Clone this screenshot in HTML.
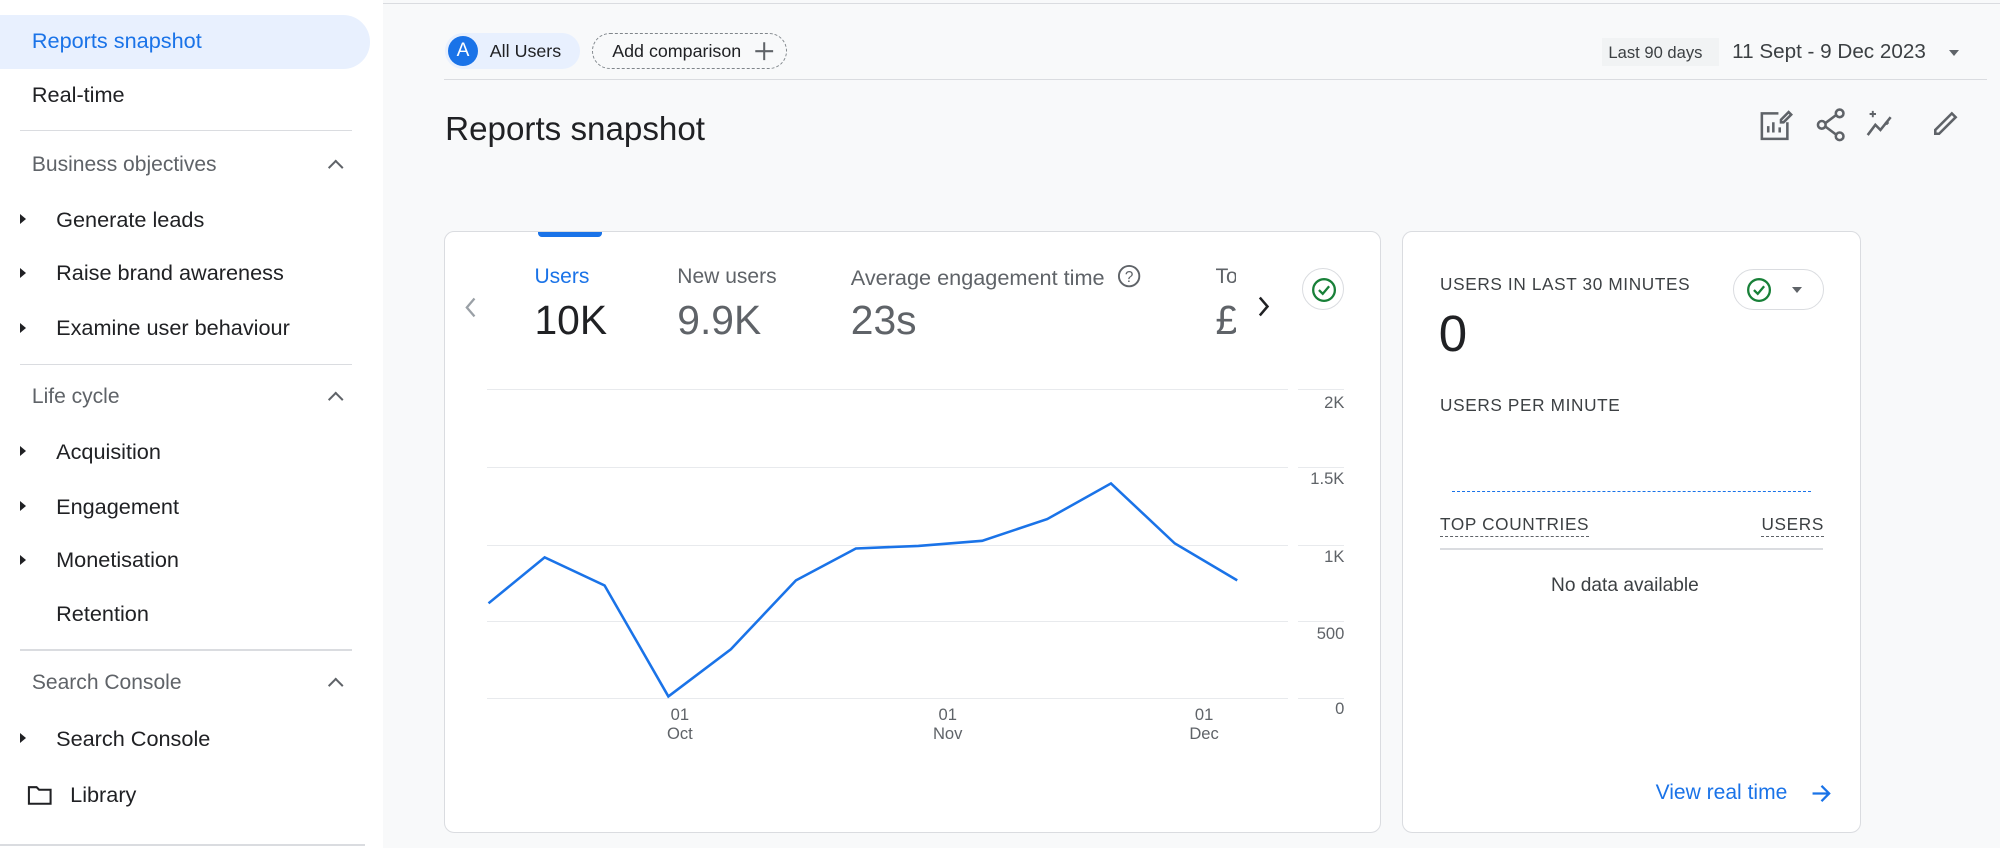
<!DOCTYPE html>
<html><head><meta charset="utf-8"><style>
*{box-sizing:border-box;margin:0;padding:0}
html,body{width:2000px;height:848px;overflow:hidden}
body{background:#f8f9fa;font-family:"Liberation Sans",Arial,sans-serif;color:#202124}
#z{zoom:1.27551;width:1568px;height:665px;position:relative}
.a{position:absolute;white-space:nowrap}
.side{position:absolute;left:0;top:0;width:300px;height:665px;background:#fff}
.si{position:absolute;font-size:17px;color:#202124}
.sh{position:absolute;font-size:16.5px;color:#5f6368}
.hr{position:absolute;left:16px;width:260px;height:1px;background:#dadce0}
.tri{position:absolute;left:16px;width:0;height:0;border-top:4px solid transparent;border-bottom:4px solid transparent;border-left:5px solid #202124}
.car{position:absolute;left:259px;width:9px;height:9px;border-left:2px solid #5f6368;border-top:2px solid #5f6368;transform:rotate(45deg)}
.card{position:absolute;background:#fff;border:1px solid #dadce0;border-radius:8px}
.g{position:absolute;height:1px;background:#e8eaed}
.yl{position:absolute;font-size:13px;color:#5f6368;text-align:right;width:40px}
.xl{position:absolute;font-size:13px;color:#5f6368;text-align:center;width:40px;line-height:15px}
</style></head><body><div id="z">
<div class="side">
 <div class="a" style="left:0;top:12px;width:290px;height:42px;background:#e8f0fe;border-radius:0 21px 21px 0"></div>
 <div class="si" style="left:25px;top:22px;color:#1a73e8">Reports snapshot</div>
 <div class="si" style="left:25px;top:64px">Real-time</div>
 <div class="hr" style="top:102px"></div>
 <div class="sh" style="left:25px;top:120px">Business objectives</div><div class="car" style="top:127px"></div>
 <div class="tri" style="top:168px"></div><div class="si" style="left:44px;top:162px">Generate leads</div>
 <div class="tri" style="top:210px"></div><div class="si" style="left:44px;top:204px">Raise brand awareness</div>
 <div class="tri" style="top:253px"></div><div class="si" style="left:44px;top:247px">Examine user behaviour</div>
 <div class="hr" style="top:285px"></div>
 <div class="sh" style="left:25px;top:302px">Life cycle</div><div class="car" style="top:309px"></div>
 <div class="tri" style="top:350px"></div><div class="si" style="left:44px;top:344px">Acquisition</div>
 <div class="tri" style="top:393px"></div><div class="si" style="left:44px;top:387px">Engagement</div>
 <div class="tri" style="top:435px"></div><div class="si" style="left:44px;top:429px">Monetisation</div>
 <div class="si" style="left:44px;top:471px">Retention</div>
 <div class="hr" style="top:509px"></div>
 <div class="sh" style="left:25px;top:526px">Search Console</div><div class="car" style="top:533px"></div>
 <div class="tri" style="top:575px"></div><div class="si" style="left:44px;top:569px">Search Console</div>
 <svg class="a" style="left:21px;top:615px" width="20" height="17" viewBox="0 0 20 17"><path d="M1.5 2.5h6l2 2h9v11h-17z" fill="none" stroke="#202124" stroke-width="1.6"/></svg>
 <div class="si" style="left:55px;top:613px">Library</div>
 <div class="hr" style="top:662px;left:0;width:286px"></div>
</div>
<div class="a" style="left:300px;top:2px;width:1268px;height:1px;background:#dadce0"></div>
<div class="a" style="left:348px;top:62px;width:1210px;height:1px;background:#dadce0"></div>
<div class="a" style="left:349px;top:26px;width:106px;height:28px;background:#e8f0fe;border-radius:14px"></div>
<div class="a" style="left:351px;top:28px;width:24px;height:24px;border-radius:12px;background:#1a73e8;color:#fff;font-size:15px;text-align:center;line-height:24px">A</div>
<div class="a" style="left:384px;top:32px;font-size:14px">All Users</div>
<div class="a" style="left:464px;top:26px;width:153px;height:28px;border:1px dashed #80868b;border-radius:14px"></div>
<div class="a" style="left:480px;top:32px;font-size:14px">Add comparison</div>
<svg class="a" style="left:591px;top:32px" width="16" height="16"><path d="M8 1v14M1 8h14" stroke="#5f6368" stroke-width="1.6"/></svg>
<div class="a" style="left:1256px;top:30px;width:92px;height:22px;background:#f1f3f4"></div>
<div class="a" style="left:1261px;top:34px;font-size:13px;color:#3c4043">Last 90 days</div>
<div class="a" style="left:1358px;top:31px;font-size:16.2px;color:#3c4043">11 Sept - 9 Dec 2023</div>
<div class="a" style="left:1528px;top:39px;border-left:4px solid transparent;border-right:4px solid transparent;border-top:5px solid #5f6368"></div>
<div class="a" style="left:349px;top:87px;font-size:26px">Reports snapshot</div>
<svg class="a" style="left:1378px;top:84px" width="160" height="28" viewBox="0 0 160 28" fill="none" stroke="#5f6368" stroke-width="2">
 <path d="M16 5H3v20h20V12"/><path d="M8 20v-5M12 20v-8M17 20v-4"/><path d="M18 10l6-6 2 2-6 6h-2z"/>
 <circle cx="64" cy="5" r="3"/><circle cx="50" cy="14" r="3"/><circle cx="64" cy="23" r="3"/><path d="M53 12.5l8-6M53 15.5l8 6"/>
 <path d="M86 22l6-8 4 4 8-10"/><path d="M90 3v5M87.5 5.5h5M101 11v3M99.5 12.5h3" stroke-width="1.5"/>
 <path d="M145 22l13-13 3 3-13 13h-3z" transform="translate(-6,-4)"/>
</svg>
<div class="card" style="left:348px;top:181px;width:735px;height:472px"></div>
<div class="a" style="left:422px;top:182px;width:50px;height:4px;background:#1a73e8;border-radius:0 0 3px 3px"></div>
<svg class="a" style="left:363px;top:232px" width="12" height="18"><path d="M9 2L3 9l6 7" fill="none" stroke="#9aa0a6" stroke-width="1.8"/></svg>
<div class="a" style="left:419px;top:208px;font-size:16.5px;color:#1a73e8">Users</div>
<div class="a" style="left:419px;top:233px;font-size:32px;color:#202124">10K</div>
<div class="a" style="left:531px;top:208px;font-size:16.5px;color:#5f6368">New users</div>
<div class="a" style="left:531px;top:233px;font-size:32px;color:#5f6368">9.9K</div>
<div class="a" style="left:667px;top:208px;font-size:17px;color:#5f6368">Average engagement time</div>
<svg class="a" style="left:876px;top:207px" width="19" height="19"><circle cx="9.5" cy="9.5" r="8" fill="none" stroke="#5f6368" stroke-width="1.5"/><text x="9.5" y="14" font-size="12" text-anchor="middle" fill="#5f6368" font-family="Liberation Sans">?</text></svg>
<div class="a" style="left:667px;top:233px;font-size:32px;color:#5f6368">23s</div>
<div class="a" style="left:953px;top:208px;width:16px;overflow:hidden;font-size:16.5px;color:#5f6368">To</div>
<div class="a" style="left:953px;top:233px;width:16px;overflow:hidden;font-size:32px;color:#5f6368">£</div>
<svg class="a" style="left:985px;top:231px" width="12" height="18"><path d="M3 2l6 7-6 7" fill="none" stroke="#202124" stroke-width="2"/></svg>
<div class="a" style="left:1021px;top:210px;width:33px;height:33px;border-radius:50%;border:1px solid #dadce0"></div>
<svg class="a" style="left:1027px;top:216px" width="22" height="22"><circle cx="11" cy="11" r="8.5" fill="none" stroke="#188038" stroke-width="1.8"/><path d="M7 11l3 3 5-6" fill="none" stroke="#188038" stroke-width="1.8"/></svg>
<div class="g" style="left:382px;top:305px;width:628px"></div><div class="g" style="left:1018px;top:305px;width:36px"></div>
<div class="g" style="left:382px;top:366px;width:628px"></div><div class="g" style="left:1018px;top:366px;width:36px"></div>
<div class="g" style="left:382px;top:427px;width:628px"></div><div class="g" style="left:1018px;top:427px;width:36px"></div>
<div class="g" style="left:382px;top:487px;width:628px"></div><div class="g" style="left:1018px;top:487px;width:36px"></div>
<div class="g" style="left:382px;top:547px;width:628px"></div><div class="g" style="left:1018px;top:547px;width:36px"></div>
<div class="yl" style="left:1014px;top:308px">2K</div>
<div class="yl" style="left:1014px;top:368px">1.5K</div>
<div class="yl" style="left:1014px;top:429px">1K</div>
<div class="yl" style="left:1014px;top:489px">500</div>
<div class="yl" style="left:1014px;top:548px">0</div>
<div class="xl" style="left:513px;top:553px">01<br>Oct</div>
<div class="xl" style="left:723px;top:553px">01<br>Nov</div>
<div class="xl" style="left:924px;top:553px">01<br>Dec</div>
<svg class="a" style="left:0;top:0" width="1100" height="600"><polyline fill="none" stroke="#1a73e8" stroke-width="2" points="383,473 427,437 474,459 524,546 573,509 624,455 671,430 720,428 770,424 821,407 871,379 921,426 970,455"/></svg>
<div class="card" style="left:1099px;top:181px;width:360px;height:472px"></div>
<div class="a" style="left:1129px;top:215px;font-size:13.5px;color:#3c4043;letter-spacing:.5px">USERS IN LAST 30 MINUTES</div>
<div class="a" style="left:1128px;top:238px;font-size:40px;color:#202124">0</div>
<div class="a" style="left:1359px;top:211px;width:71px;height:32px;border:1px solid #dadce0;border-radius:16px"></div>
<svg class="a" style="left:1368px;top:216px" width="22" height="22"><circle cx="11" cy="11" r="8.5" fill="none" stroke="#188038" stroke-width="1.8"/><path d="M7 11l3 3 5-6" fill="none" stroke="#188038" stroke-width="1.8"/></svg>
<div class="a" style="left:1405px;top:225px;border-left:4px solid transparent;border-right:4px solid transparent;border-top:5px solid #5f6368"></div>
<div class="a" style="left:1129px;top:310px;font-size:13.5px;color:#3c4043;letter-spacing:.5px">USERS PER MINUTE</div>
<div class="a" style="left:1138px;top:385px;width:282px;border-top:1.5px dashed #1a73e8"></div>
<div class="a" style="left:1129px;top:403px;font-size:13.5px;color:#3c4043;letter-spacing:.5px;border-bottom:1px dashed #5f6368;padding-bottom:1px">TOP COUNTRIES</div>
<div class="a" style="left:1381px;top:403px;font-size:13.5px;color:#3c4043;letter-spacing:.5px;border-bottom:1px dashed #5f6368;padding-bottom:1px">USERS</div>
<div class="a" style="left:1129px;top:430px;width:300px;height:1px;background:#dadce0"></div>
<div class="a" style="left:1216px;top:451px;font-size:15px;color:#3c4043">No data available</div>
<div class="a" style="left:1298px;top:612px;font-size:16.5px;color:#1a73e8">View real time</div>
<svg class="a" style="left:1419px;top:613px" width="18" height="18"><path d="M2 9h13M9 3l6 6-6 6" fill="none" stroke="#1a73e8" stroke-width="1.8"/></svg>
</div></body></html>
